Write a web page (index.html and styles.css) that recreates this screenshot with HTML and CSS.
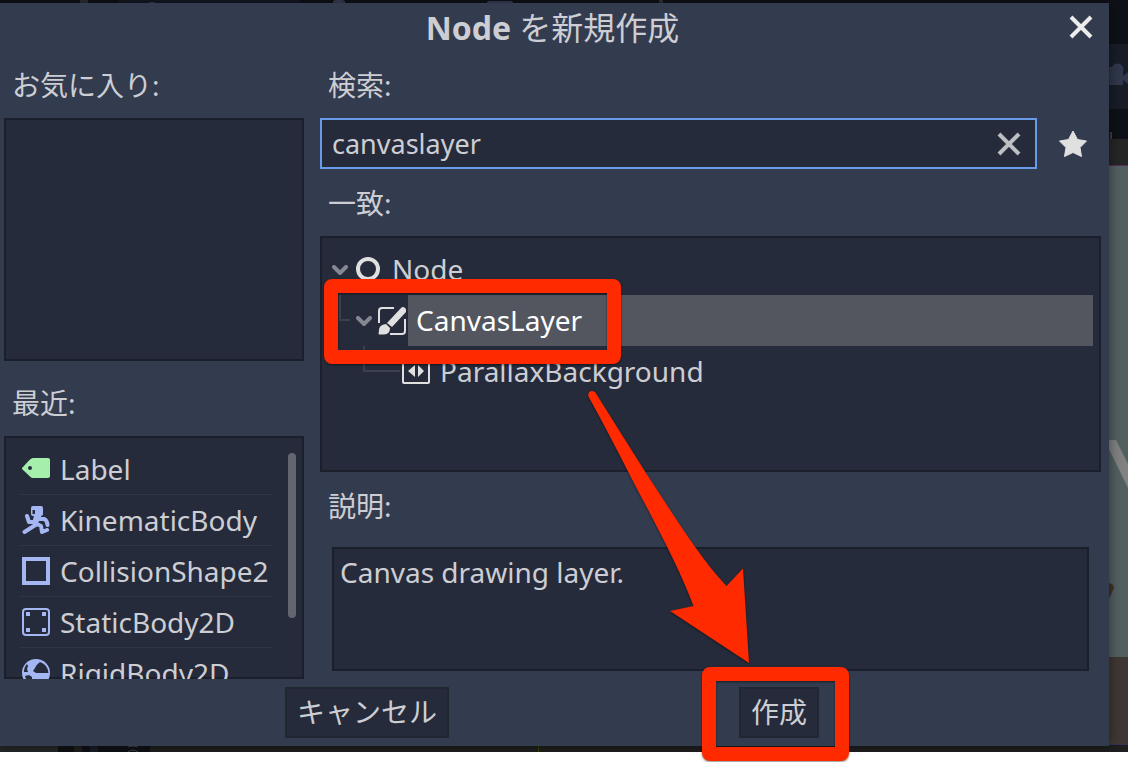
FILE: index.html
```html
<!DOCTYPE html>
<html lang="ja">
<head>
    <meta charset="UTF-8">
    <meta name="viewport" content="width=device-width, initial-scale=1.0">
    <title>Node を新規作成</title>
    <link rel="stylesheet" href="styles.css">
</head>
<body>
    <div class="editor">
        <!-- エディタ画面の背景 -->
        <svg class="backdrop" aria-hidden="true">
            <rect width="1128" height="752" fill="#0e1117"/>
            <rect x="118" width="182" height="4" fill="#151922"/>
            <path d="M80 0h8v4h-8z" fill="#2d2f30"/>
            <path d="M146 4q6-4 12 0z" fill="#3a4260"/>
            <path d="M333 4V1q6-3 12 0v3zM487 4V2l2-1h22l2 1v2z" fill="#383e55"/>
            <path d="M659 0h4v4h-4z" fill="#343434"/>
            <rect x="1100" y="44" width="28" height="65" fill="#181d28"/>
            <path d="M1109 67h3a6 6 0 1 1 11 5v4l5-4v12l-5-4v5h-14z" fill="#31384d"/>
            <path d="M1110 132h2v7h-2z" fill="#3c3e42"/>
            <rect x="1100" y="139" width="28" height="26" fill="#262626"/>
            <rect x="1100" y="165" width="28" height="1" fill="#54304f"/>
            <rect x="1100" y="166" width="28" height="491" fill="#536061"/>
            <path d="M1109 440h7l12 24v24l-19-39z" fill="#828283"/>
            <path d="M1109 583q5 1 5 5l-5 11z" fill="#413427"/>
            <rect x="1100" y="657" width="28" height="87" fill="#403834"/>
            <rect x="1100" y="744" width="28" height="1" fill="#373350"/>
            <rect y="745" width="1128" height="7" fill="#1f1f1f"/>
            <rect y="745" width="58" height="7" fill="#26272a"/>
            <path d="M58 745h16v7H58zM82 745h68v7H82z" fill="#0f1116"/>
            <path d="M90 745h8v7h-8z" fill="#191e2a"/>
            <path d="M128 747q5-2 10 0M128 752q5-4 10 0" stroke="#44464b" fill="none"/>
            <path d="M538 745h1v7h-1z" fill="#304600"/>
        </svg>

        <form class="dialog" role="dialog" aria-labelledby="dialogTitle">
            <header class="titlebar">
                <h1 id="dialogTitle">Node <span>を新規作成</span></h1>
                <button type="button" class="close" aria-label="閉じる">
                    <svg width="24" height="24" viewBox="0 0 24 24"><path d="M2 2l20 20M22 2L2 22" stroke="#ececec" stroke-width="4" fill="none"/></svg>
                </button>
            </header>

            <div class="panes">
                <div class="side">
                    <h2 class="caption">お気に入り:</h2>
                    <div class="panel favorites"></div>
                    <h2 class="caption">最近:</h2>
                    <div class="panel recent">
                        <ul>
                            <li>
                                <svg class="icon" viewBox="0 0 28 28"><path fill="#a5efac" fill-rule="evenodd" d="M0 13L8 4.500Q9.500 3 11 3h15q2 0 2 2v16q0 2-2 2H11q-1.500 0-3-1.500L0 14zM8 11a2 2 0 1 0 0 4a2 2 0 0 0 0-4z"/></svg>
                                <span>Label</span>
                            </li>
                            <li>
                                <svg class="icon" viewBox="0 0 28 28"><path fill="#a5b7f3" fill-rule="evenodd" d="M11 0h8q2 0 2 2v6q0 2-2 2h-8q-2 0-2-2V2q0-2 2-2zM10.500 4v4H13V4z"/><path d="M12 10h7v3l-5 6-4-2z" fill="#a5b7f3"/><path d="M5 10l2 6h6M2.500 26L15 18l4 2 1 6 5-2M18 13h4q3 1 3.500 6" stroke="#a5b7f3" stroke-width="4" stroke-linecap="round" stroke-linejoin="round" fill="none"/></svg>
                                <span>KinematicBody</span>
                            </li>
                            <li>
                                <svg class="icon" viewBox="0 0 28 28"><rect x="2" y="2" width="24" height="24" fill="none" stroke="#a5b7f3" stroke-width="4"/></svg>
                                <span>CollisionShape2</span>
                            </li>
                            <li>
                                <svg class="icon" viewBox="0 0 28 28"><rect x="1" y="1" width="26" height="26" rx="3" fill="none" stroke="#a5b7f3" stroke-width="2"/><path d="M4 4h4v4H4zM20 4h4v4h-4zM4 20h4v4H4zM20 20h4v4h-4z" fill="#a5b7f3"/></svg>
                                <span>StaticBody2D</span>
                            </li>
                            <li>
                                <svg class="icon" viewBox="0 0 28 28"><circle cx="14" cy="14" r="14" fill="#a5b7f3"/><path d="M13 9q2-4 5-6q8 3 8.500 11H14l-3-2zM5 5l1 2-1 3 1 3H2q0-5 3-8zM3 17l4-1 3 2v7q-6-3-7-8z" fill="#262b3b"/></svg>
                                <span>RigidBody2D</span>
                            </li>
                        </ul>
                        <div class="scrollbar"></div>
                    </div>
                </div>

                <div class="main">
                    <label class="caption" for="search">検索:</label>
                    <div class="search-row">
                        <div class="search-box">
                            <input type="text" id="search" value="canvaslayer">
                            <button type="button" class="clear" aria-label="クリア">
                                <svg width="24" height="24" viewBox="0 0 24 24"><path d="M2 2l20 20M22 2L2 22" stroke="#bebfc4" stroke-width="4" fill="none"/></svg>
                            </button>
                        </div>
                        <button type="button" class="favorite" aria-label="お気に入りに追加">
                            <svg class="icon" viewBox="0 0 28 28"><path fill="#e0e0e0" stroke="#e0e0e0" stroke-linejoin="round" d="M14 1l4.500 8.500 9 1.500-6.500 6.500 1.500 9L14 22.500 5.500 26.500 7 17.500.500 11l9-1.500z"/></svg>
                        </button>
                    </div>

                    <h2 class="caption spaced">一致:</h2>
                    <ul class="panel tree" role="tree">
                        <li class="row" role="treeitem">
                            <button type="button" class="fold" aria-label="折りたたむ"><svg width="16" height="10" viewBox="0 0 16 10"><path d="M2 2l6 6 6-6"/></svg></button>
                            <svg class="icon" viewBox="0 0 28 28"><circle cx="14" cy="13" r="10" fill="none" stroke="#e0e0e0" stroke-width="4"/></svg>
                            <span class="name">Node</span>
                        </li>
                        <li class="row level-1 selected" role="treeitem" aria-selected="true">
                            <span class="guide"></span>
                            <button type="button" class="fold" aria-label="折りたたむ"><svg width="16" height="10" viewBox="0 0 16 10"><path d="M2 2l6 6 6-6"/></svg></button>
                            <svg class="icon" viewBox="0 0 28 28"><path d="M16 1H4Q1 1 1 4v12M27 12v12q0 3-3 3H12" fill="none" stroke="#e0e0e0" stroke-width="2"/><path d="M23 1q2-2 4 0t1 4L14 20l-5-4zM8 17l4 4q0 6-6 6.500H1Q0 26 1 25q-1-7 7-8z" fill="#e0e0e0"/></svg>
                            <span class="name">CanvasLayer</span>
                        </li>
                        <li class="row level-2" role="treeitem">
                            <span class="guide"></span>
                            <svg class="icon" viewBox="0 0 28 28"><rect x="1" y="1" width="26" height="24" rx="1" fill="none" stroke="#e0e0e0" stroke-width="2"/><path d="M6 13l7-6v12zM22 13l-6-6v12z" fill="#e0e0e0"/></svg>
                            <span class="name">ParallaxBackground</span>
                        </li>
                    </ul>

                    <h2 class="caption spaced">説明:</h2>
                    <div class="panel description">Canvas drawing layer.</div>
                </div>
            </div>

            <footer class="actions">
                <div><button type="button">キャンセル</button></div>
                <div><button type="submit">作成</button></div>
            </footer>
        </form>
    </div>

    <!-- 手順を示す赤枠と矢印 -->
    <svg class="marks" aria-hidden="true">
        <rect x="331" y="286" width="283" height="71" rx="1"/>
        <rect x="709" y="674" width="133" height="80" rx="1"/>
        <path d="M588.500 396.500C587 391 593 389 596 393.500Q620 432 645 471.500C672 512 698 556 726.500 586L743 568.500 749 663 670 611 693.500 606C677 562 652 518 628 471.500Q608 432 588.500 396.500z"/>
    </svg>
</body>
</html>
```

FILE: styles.css
```css
:root {
    --dialog-bg: #333b4f;
    --panel-bg: #262b3b;
    --panel-border: #1b1f2b;
    --text-color: #cdced3;
    --accent: #699ce8;
    --mark: #ff2a00;
}

* {
    box-sizing: border-box;
}

body {
    margin: 0;
    background: #fff;
    color: var(--text-color);
    font-family: 'Noto Sans', 'Noto Sans CJK JP', sans-serif;
    font-size: 28px;
    line-height: 39px;
}

h1, h2, ul {
    margin: 0;
    padding: 0;
    font-weight: normal;
}

ul {
    list-style: none;
}

button, input {
    font: inherit;
    color: inherit;
    padding: 0;
    border: none;
    background: none;
}

.editor {
    position: relative;
    display: flex;
    min-height: calc(100vh - 10px);
    padding: 3px 19px 6px 0;
    overflow: hidden;
}

.backdrop {
    position: absolute;
    top: 0;
    left: 0;
    width: 100%;
    height: 100%;
}

.dialog {
    position: relative;
    flex: 1;
    display: flex;
    flex-direction: column;
    background: var(--dialog-bg);
    box-shadow: 0 0 12px rgba(0, 0, 0, 0.5);
}

.titlebar {
    display: grid;
    grid-template-columns: 52px 1fr 56px;
    align-items: center;
    height: 52px;
    padding-bottom: 4px;
}

h1 {
    grid-column: 2;
    text-align: center;
    font-size: 32px;
    font-weight: bold;
}

h1 span {
    font-weight: normal;
}

.close, .clear, .favorite, .fold {
    display: flex;
    align-items: center;
    justify-content: center;
}

.panes {
    flex: 1;
    display: grid;
    grid-template-columns: 300px 1fr;
    gap: 16px;
    padding: 0 8px 0 4px;
}

.side, .main {
    display: flex;
    flex-direction: column;
    min-width: 0;
}

.main {
    padding-bottom: 8px;
}

.caption {
    padding: 11px 8px 13px;
    font-size: 28px;
}

.caption.spaced {
    margin-top: 4px;
}

/* 枠線は内側の影で描き、一覧の行がその上に重なる */
.panel {
    background: var(--panel-bg);
    box-shadow: inset 0 0 0 2px var(--panel-border);
}

.favorites, .recent {
    flex: 1 1 0;
    min-height: 0;
}

.favorites {
    margin-bottom: 12px;
}

.recent {
    display: flex;
    justify-content: space-between;
    padding: 0 8px 0 16px;
    overflow: hidden;
}

.recent ul {
    width: 252px;
    height: 0;
    margin-top: 8px;
}

.recent li {
    display: flex;
    align-items: center;
    gap: 10px;
    height: 51px;
    padding: 0 2px;
    border-bottom: 1px solid #303545;
    white-space: nowrap;
}

.scrollbar {
    width: 8px;
    height: 165px;
    margin-top: 17px;
    border-radius: 4px;
    background: #636670;
}

.icon {
    flex: none;
    width: 28px;
    height: 28px;
}

.search-row {
    display: flex;
    gap: 8px;
}

.search-box {
    flex: 1;
    display: flex;
    height: 51px;
    padding: 0 14px 0 10px;
    border: 2px solid var(--accent);
    background: var(--panel-bg);
}

.search-box input {
    flex: 1;
    min-width: 0;
    outline: none;
    font-size: 27px;
}

.favorite {
    width: 56px;
}

.tree {
    flex: 1;
    padding: 8px;
}

.row {
    display: flex;
    align-items: center;
    gap: 2px;
    height: 51px;
}

.fold {
    width: 24px;
    height: 24px;
}

.fold path {
    fill: none;
    stroke: #858892;
    stroke-width: 4;
    stroke-linecap: round;
}

.name {
    flex: 1;
    padding: 6px 8px;
}

.selected .name {
    background: #53565f;
    color: #fff;
}

.guide {
    align-self: flex-start;
    width: 11px;
    height: 26px;
    margin-left: 11px;
    border: solid #3c404e;
    border-width: 0 0 2px 2px;
}

.level-2 .guide {
    width: 37px;
    margin-left: 35px;
}

.description {
    height: 124px;
    margin: 8px 12px 0;
    padding: 6px 8px;
}

.actions {
    display: grid;
    grid-template-columns: 1fr 80px;
    padding: 8px 290px 8px 285px;
}

.actions button {
    display: block;
    height: 51px;
    padding: 0 10px;
    border: 2px solid #212631;
    background: var(--panel-bg);
    white-space: nowrap;
}

.marks {
    position: absolute;
    top: 0;
    left: 0;
    width: 100%;
    height: 762px;
    filter: drop-shadow(0 1px 1px rgba(0, 0, 0, 0.5));
    pointer-events: none;
}

.marks rect {
    fill: none;
    stroke: var(--mark);
    stroke-width: 14;
    stroke-linejoin: round;
}

.marks path {
    fill: var(--mark);
}
```
